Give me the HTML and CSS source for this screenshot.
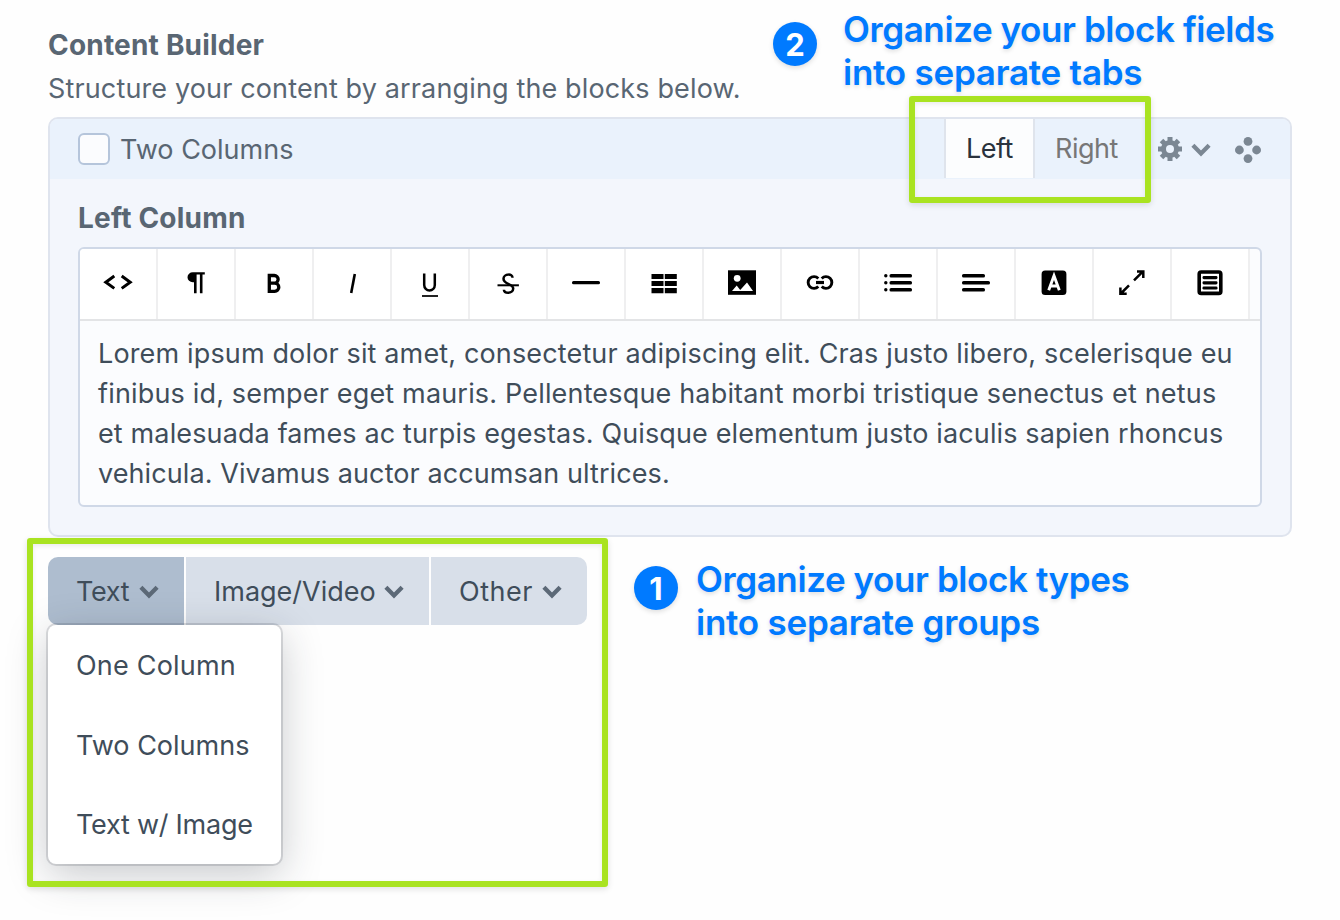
FILE: index.html
```html
<!DOCTYPE html>
<html lang="en">
<head>
<meta charset="utf-8">
<title>Content Builder</title>
<link rel="stylesheet" href="styles.css">
</head>
<body>
<svg class="defs" width="0" height="0">
  <symbol id="chevron" viewBox="0 0 20 14"><path d="M1.900 2.300 10 10.400l8.100-8.100" fill="none" stroke="currentColor" stroke-width="4.300" stroke-linecap="butt" stroke-linejoin="miter"/></symbol>
</svg>
<main class="page">
  <h1 class="title"><span class="t-title">Content Builder</span></h1>
  <p class="intro"><span class="t-intro">Structure your content by arranging the blocks below.</span></p>

  <section class="block">
    <header class="block-head">
      <span class="checkbox"></span>
      <span class="block-name t-name">Two Columns</span>
      <nav class="tabs">
        <a class="tab tab-active"><span class="t-left">Left</span></a>
        <a class="tab"><span class="t-right">Right</span></a>
      </nav>
      <div class="actions">
        <svg class="gear" viewBox="-12 -12 24 24"><g fill="currentColor"><rect x="-2.5" y="-12" width="5" height="24"/><rect x="-12" y="-2.5" width="24" height="5"/><g transform="rotate(45)"><rect x="-2.5" y="-12" width="5" height="24"/><rect x="-12" y="-2.5" width="24" height="5"/></g><circle r="9"/></g><circle r="4" class="gear-hole"/></svg>
        <svg class="chev"><use href="#chevron"/></svg>
        <svg class="move" viewBox="0 0 26 26" fill="currentColor"><circle cx="13" cy="4.4" r="4.4"/><circle cx="4.4" cy="13" r="4.4"/><circle cx="21.6" cy="13" r="4.4"/><circle cx="13" cy="21.6" r="4.4"/></svg>
      </div>
    </header>
    <div class="block-body">
      <h2 class="label"><span class="t-label">Left Column</span></h2>
      <div class="editor">
        <div class="toolbar">
          <span class="tool"><svg viewBox="0 0 36 36"><path d="M14.300 12 5.800 18.200l8.500 6.200M21.700 12l8.500 6.200-8.500 6.200" fill="none" stroke="#000" stroke-width="3"/></svg></span>
          <span class="tool"><svg viewBox="0 0 36 36"><path d="M26.800 8.300h-12a5.300 5 0 0 0 0 10h1.200v11h2.600V10.600h3.300v18.700h2.600V10.600h2.300z"/></svg></span>
          <span class="tool"><svg viewBox="0 0 36 36"><path d="M13.300 11.500v15.900h5.400a4 4 0 0 0 0-8.200h-5 4.600a3.700 3.700 0 0 0 0-7.700z" fill="none" stroke="#000" stroke-width="3.300"/></svg></span>
          <span class="tool"><svg viewBox="0 0 36 36"><path d="M20.800 10 17.200 29" fill="none" stroke="#000" stroke-width="2.600"/></svg></span>
          <span class="tool"><svg viewBox="0 0 36 36"><path d="M12.200 9.500v11.600a5.300 5.300 0 0 0 10.600 0V9.500" fill="none" stroke="#000" stroke-width="2.500"/><path d="M10 32h16" stroke="#222" stroke-width="2"/></svg></span>
          <span class="tool"><svg viewBox="0 0 36 36"><path d="M22.500 13.800c0-2.400-2-3.300-4-3.200-3 0-5 2-5 4.200 0 6 9.700 4.600 9.700 9.700 0 2.700-2.300 4.200-5 4.200s-4.200-1.100-4.300-3" fill="none" stroke="#000" stroke-width="2.500"/><path d="M7.500 21.300h21.400" stroke="#000" stroke-width="2"/></svg></span>
          <span class="tool"><svg viewBox="0 0 36 36"><rect x="4" y="17" width="28" height="3.200" rx="1.500"/></svg></span>
          <span class="tool"><svg viewBox="0 0 36 36"><path d="M5.500 10h12v5h-12zM18.800 10h12v5h-12zM5.500 17h12v5h-12zM18.800 17h12v5h-12zM5.500 24h12v5.300h-12zM18.800 24h12v5.300h-12z"/></svg></span>
          <span class="tool"><svg viewBox="0 0 36 36"><rect x="4" y="6.300" width="28" height="24.500"/><circle cx="13.200" cy="14.300" r="3.400" fill="#fff"/><path d="m8 27 4.700-5.600 3.500 4.600 6.800-7.600L29 27z" fill="#fff"/></svg></span>
          <span class="tool"><svg viewBox="0 0 36 36"><path d="M16.300 14.400A5.900 5.900 0 1 0 16.300 22.600M19.700 14.400a5.900 5.900 0 1 1 0 8.200" fill="none" stroke="#000" stroke-width="2.900"/><path d="M14 18.500h8" stroke="#000" stroke-width="3.200"/></svg></span>
          <span class="tool"><svg viewBox="0 0 36 36"><rect x="9.500" y="10" width="22.500" height="3.500" rx="1.600"/><rect x="9.500" y="17" width="22.500" height="3.500" rx="1.600"/><rect x="9.500" y="24" width="22.500" height="3.500" rx="1.600"/><circle cx="5.800" cy="11.700" r="1.700"/><circle cx="5.800" cy="18.700" r="1.700"/><circle cx="5.800" cy="25.700" r="1.700"/></svg></span>
          <span class="tool"><svg viewBox="0 0 36 36"><rect x="4" y="10" width="23" height="3.500" rx="1.600"/><rect x="4" y="17" width="28" height="3.500" rx="1.600"/><rect x="4" y="24" width="23" height="3.500" rx="1.600"/></svg></span>
          <span class="tool"><svg viewBox="0 0 36 36"><rect x="5.600" y="6.400" width="24.800" height="24.600" rx="3.500"/><path d="m12.700 26.300 5.300-14.500 5.300 14.500M14.500 22h7" fill="none" stroke="#fff" stroke-width="2.900"/></svg></span>
          <span class="tool"><svg viewBox="0 0 36 36"><path d="m20 16.300 8.500-8.500M23 7.600h6.300v6.300M15 21.400l-7.600 7.600M6.400 23.400v6.300h6.300" fill="none" stroke="#000" stroke-width="2.500"/></svg></span>
          <span class="tool"><svg viewBox="0 0 36 36"><rect x="7.200" y="8" width="21.600" height="21.400" rx="2" fill="none" stroke="#000" stroke-width="3.600"/><rect x="10.500" y="12" width="15" height="3.200" rx="1.400"/><rect x="10.500" y="17.200" width="15" height="3.200" rx="1.400"/><rect x="10.500" y="22.400" width="15" height="3.200" rx="1.400"/></svg></span>
        </div>
        <div class="copy">
          <div class="t-l1">Lorem ipsum dolor sit amet, consectetur adipiscing elit. Cras justo libero, scelerisque eu</div>
          <div class="t-l2">finibus id, semper eget mauris. Pellentesque habitant morbi tristique senectus et netus</div>
          <div class="t-l3">et malesuada fames ac turpis egestas. Quisque elementum justo iaculis sapien rhoncus</div>
          <div class="t-l4">vehicula. Vivamus auctor accumsan ultrices.</div>
        </div>
      </div>
    </div>
  </section>

  <div class="groups">
    <div class="btn btn-text"><span class="t-text">Text</span><svg class="chev"><use href="#chevron"/></svg>
      <div class="menu">
        <div class="item"><span class="t-one">One Column</span></div>
        <div class="item"><span class="t-two">Two Columns</span></div>
        <div class="item"><span class="t-img">Text w/ Image</span></div>
      </div>
    </div>
    <div class="btn btn-media"><span class="t-media">Image/Video</span><svg class="chev"><use href="#chevron"/></svg></div>
    <div class="btn btn-other"><span class="t-other">Other</span><svg class="chev"><use href="#chevron"/></svg></div>
  </div>
</main>

<div class="frame frame-tabs"></div>
<div class="frame frame-groups"></div>
<div class="note note-tabs"><span class="num">2</span><p class="note-text"><span class="t-n1">Organize your block fields</span><br><span class="t-n2">into separate tabs</span></p></div>
<div class="note note-groups"><span class="num">1</span><p class="note-text"><span class="t-n3">Organize your block types</span><br><span class="t-n4">into separate groups</span></p></div>
</body>
</html>
```
FILE: styles.css
```css
* { box-sizing: border-box; }
body {
  margin: 0;
  position: relative;
  width: 1340px;
  height: 920px;
  overflow: hidden;
  background: #fefefe;
  color: #596673;
  font: 27px/40px Inter, "Liberation Sans", sans-serif;
}
h1, h2, p { margin: 0; font-size: inherit; white-space: nowrap; }
.defs { position: absolute; }
svg { display: block; flex: none; }
.page { padding: 25px 48px 0; }
.title { height: 44px; font-size: 28px; font-weight: 700; }
.intro { height: 48px; }

/* Tracking per text run */
.t-title { letter-spacing: .2px; }
.t-label { letter-spacing: .2px; }
.t-intro { letter-spacing: .14px; }
.t-left, .t-right { letter-spacing: -.5px; }
.t-l1 { letter-spacing: .145px; }
.t-l2 { letter-spacing: .172px; }
.t-l3 { letter-spacing: .131px; }
.t-l4 { letter-spacing: .09px; }
.t-text { letter-spacing: -.3px; }
.t-one { letter-spacing: .2px; }
.t-img { letter-spacing: -.25px; }
.t-other { letter-spacing: .5px; }
.t-n1, .t-n3 { letter-spacing: -.41px; }
.t-n2, .t-n4 { letter-spacing: -.25px; }

.block {
  height: 420px;
  border: 2px solid #dfe4ee;
  border-radius: 10px;
  background: #f3f6fc;
  overflow: hidden;
}
.block-head { display: flex; align-items: center; height: 60px; padding-left: 28px; background: #eaf2fc; }
.checkbox { width: 32px; height: 32px; border: 2px solid #b5c5db; border-radius: 6px; background: #fbfcfe; }
.block-name { margin-left: 10px; padding-top: 2px; }
.tabs { display: flex; align-self: stretch; margin-left: auto; }
.tab { display: flex; align-items: center; padding: 0 0 0 20px; width: 105px; color: #777; }
.tab-active { width: 91px; height: 59px; padding-top: 1px; background: #fcfdfe; color: #29323d; border: solid #dfe4ec; border-width: 0 2px; }
.actions { display: flex; align-items: center; width: 150px; padding-left: 18px; color: #7b8793; }
.gear { width: 24px; height: 24px; }
.gear-hole { fill: #eaf2fc; }
.chev { width: 20px; height: 14px; color: #5c6977; }
.actions .chev { margin: 2px 0 0 9px; color: #7b8793; }
.move { width: 26px; height: 26px; margin: 2px 0 0 24px; }

.block-body { padding: 19px 28px 0; }
.label { height: 49px; font-size: 28px; font-weight: 700; }
.editor { height: 260px; border: 2px solid #cfd8e7; border-radius: 6px; background: #fbfcfe; overflow: hidden; }
.toolbar { display: flex; height: 72px; border-bottom: 2px solid #e3e4e6; }
.tool { display: flex; justify-content: center; align-items: center; width: 78px; height: 70px; padding-bottom: 4px; background: #fff; border-right: 2px solid #efeff0; }
.tool svg { width: 36px; height: 36px; }
.copy { padding: 13px 18px; color: #3f4d5a; white-space: nowrap; }

.groups { display: flex; gap: 2px; margin-top: 20px; color: #3f4d5a; }
.btn { position: relative; display: flex; align-items: center; justify-content: space-between; height: 68px; padding: 2px 25px 0 28px; background: #d8dfe9; }
.btn-text { width: 136px; background: #aebdcf; border-radius: 10px 0 0 10px; }
.btn-media { width: 243px; }
.btn-other { width: 156px; border-radius: 0 10px 10px 0; }
.menu {
  position: absolute;
  left: 0;
  top: 68px;
  z-index: 1;
  width: 233px;
  height: 239px;
  border-radius: 8px;
  background: #fff;
  box-shadow: 0 0 0 2px rgba(31, 41, 51, .15), 0 10px 40px rgba(31, 41, 51, .25);
}
.item { height: 79.6px; padding: 21px 28px 0; white-space: nowrap; }

.frame { position: absolute; z-index: 2; border: 6px solid #a9e321; border-radius: 3px; box-shadow: 0 2px 6px rgba(0, 0, 0, .12), inset 0 2px 5px rgba(0, 0, 0, .08); }
.frame-tabs { left: 909px; top: 96px; width: 242px; height: 107px; }
.frame-groups { left: 27px; top: 538px; width: 581px; height: 349px; }
.note { position: absolute; display: flex; color: #007aff; font-size: 35px; line-height: 43px; font-weight: 600; }
.note-tabs { left: 773px; top: 8px; }
.note-groups { left: 634px; top: 558px; }
.note-text { text-shadow: 0 2px 4px rgba(0, 0, 0, .13); }
.num { display: flex; align-items: center; justify-content: center; width: 44px; height: 44px; margin-top: 14px; border-radius: 50%; background: #007aff; color: #fff; font-size: 31px; font-weight: 700; box-shadow: 0 2px 5px rgba(0, 0, 0, .13); }
.note-groups .num { margin-top: 8px; }
.note-tabs .note-text { margin-left: 26px; }
.note-groups .note-text { margin-left: 18px; }
```
